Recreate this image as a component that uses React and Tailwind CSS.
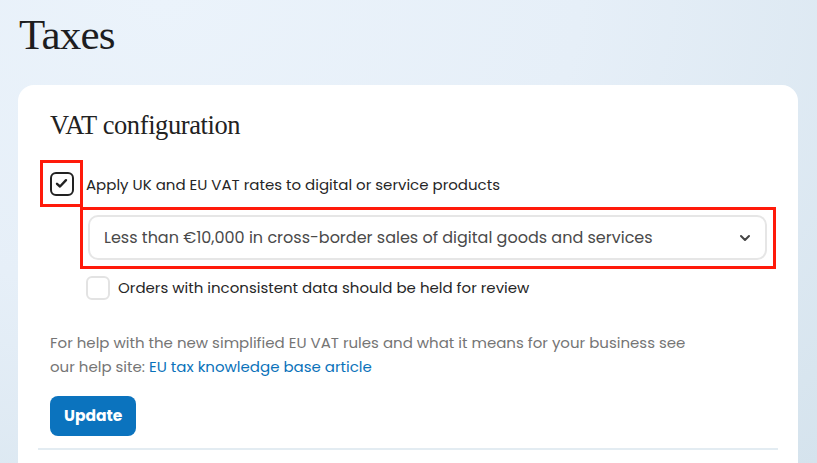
import React from "react";

export default function App() {
  const sans = { fontFamily: '"Poppins", "Open Sans", "Liberation Sans", sans-serif' };
  return (
    <div className="w-[817px] h-[463px] overflow-hidden bg-[radial-gradient(ellipse_at_20%_0%,#ebf3fb_0%,#e6eff8_45%,#d5e3ed_100%)]">
      <div className="pl-[19px] pr-[19px] pt-[11px]">
        <h1 className="text-[43px] leading-[48px] text-[#1d1d1f] tracking-[-0.8px]" style={{ fontFamily: '"Liberation Serif", "DejaVu Serif", serif' }}>
          Taxes
        </h1>
        <div className="mt-[26px] -ml-px w-[780px] h-[400px] bg-white rounded-[16px] px-[20px] pt-[24px]">
          <div className="px-[12px]">
            <h2 className="text-[26.5px] leading-[32px] text-[#222] tracking-[-0.4px]" style={{ fontFamily: '"Liberation Serif", "DejaVu Serif", serif' }}>
              VAT configuration
            </h2>
          </div>
          <div className="flex items-center mt-[19px] ml-[2px]">
            <div className="w-[43px] h-[47px] border-[3px] border-[#ff1a0a] flex items-center justify-center">
              <div className="w-[24px] h-[24px] border-2 border-[#222] rounded-[6px] flex items-center justify-center">
                <svg width="13" height="11" viewBox="0 0 13 11" fill="none">
                  <path d="M2 5.8 L5 8.5 L11 2.2" stroke="#222" strokeWidth="2.4" strokeLinecap="round" strokeLinejoin="round" />
                </svg>
              </div>
            </div>
            <span className="ml-[3px] pt-[3px] text-[15px] text-[#262626]" style={sans}>
              Apply UK and EU VAT rates to digital or service products
            </span>
          </div>
          <div className="ml-[42px] w-[696px] h-[62px] border-[3px] border-[#ff1a0a] px-[5px] pt-[5px]">
            <div className="h-[45px] w-[679px] rounded-[10px] border-2 border-[#e6e6e6] flex items-center justify-between pl-[14px] pr-[14px]">
              <span className="text-[16px] text-[#4a4a4a]" style={sans}>
                Less than €10,000 in cross-border sales of digital goods and services
              </span>
              <svg width="12" height="8" viewBox="0 0 12 8" fill="none">
                <path d="M2 2 L6 6 L10 2" stroke="#444" strokeWidth="2" strokeLinecap="round" strokeLinejoin="round" />
              </svg>
            </div>
          </div>
          <div className="flex items-center ml-[48px] mt-[7px]">
            <div className="w-[24px] h-[24px] rounded-[6px] border-2 border-[#e3e3e3]" />
            <span className="ml-[8px] text-[15px] text-[#262626]" style={sans}>
              Orders with inconsistent data should be held for review
            </span>
          </div>
          <div className="mt-[31px] ml-[12px] text-[15px] leading-[24px] text-[#757575]" style={sans}>
            <div>For help with the new simplified EU VAT rules and what it means for your business see</div>
            <div className="flex">
              <span className="whitespace-pre">our help site: </span>
              <span className="text-[#0a72ba]">EU tax knowledge base article</span>
            </div>
          </div>
          <button className="mt-[17px] ml-[12px] h-[40px] px-[14px] rounded-[8px] bg-[#0b73be] text-white text-[15.5px] font-bold" style={sans}>
            Update
          </button>
          <div className="mt-[12px] h-[2px] bg-[#e3ecf2]" />
        </div>
      </div>
    </div>
  );
}
